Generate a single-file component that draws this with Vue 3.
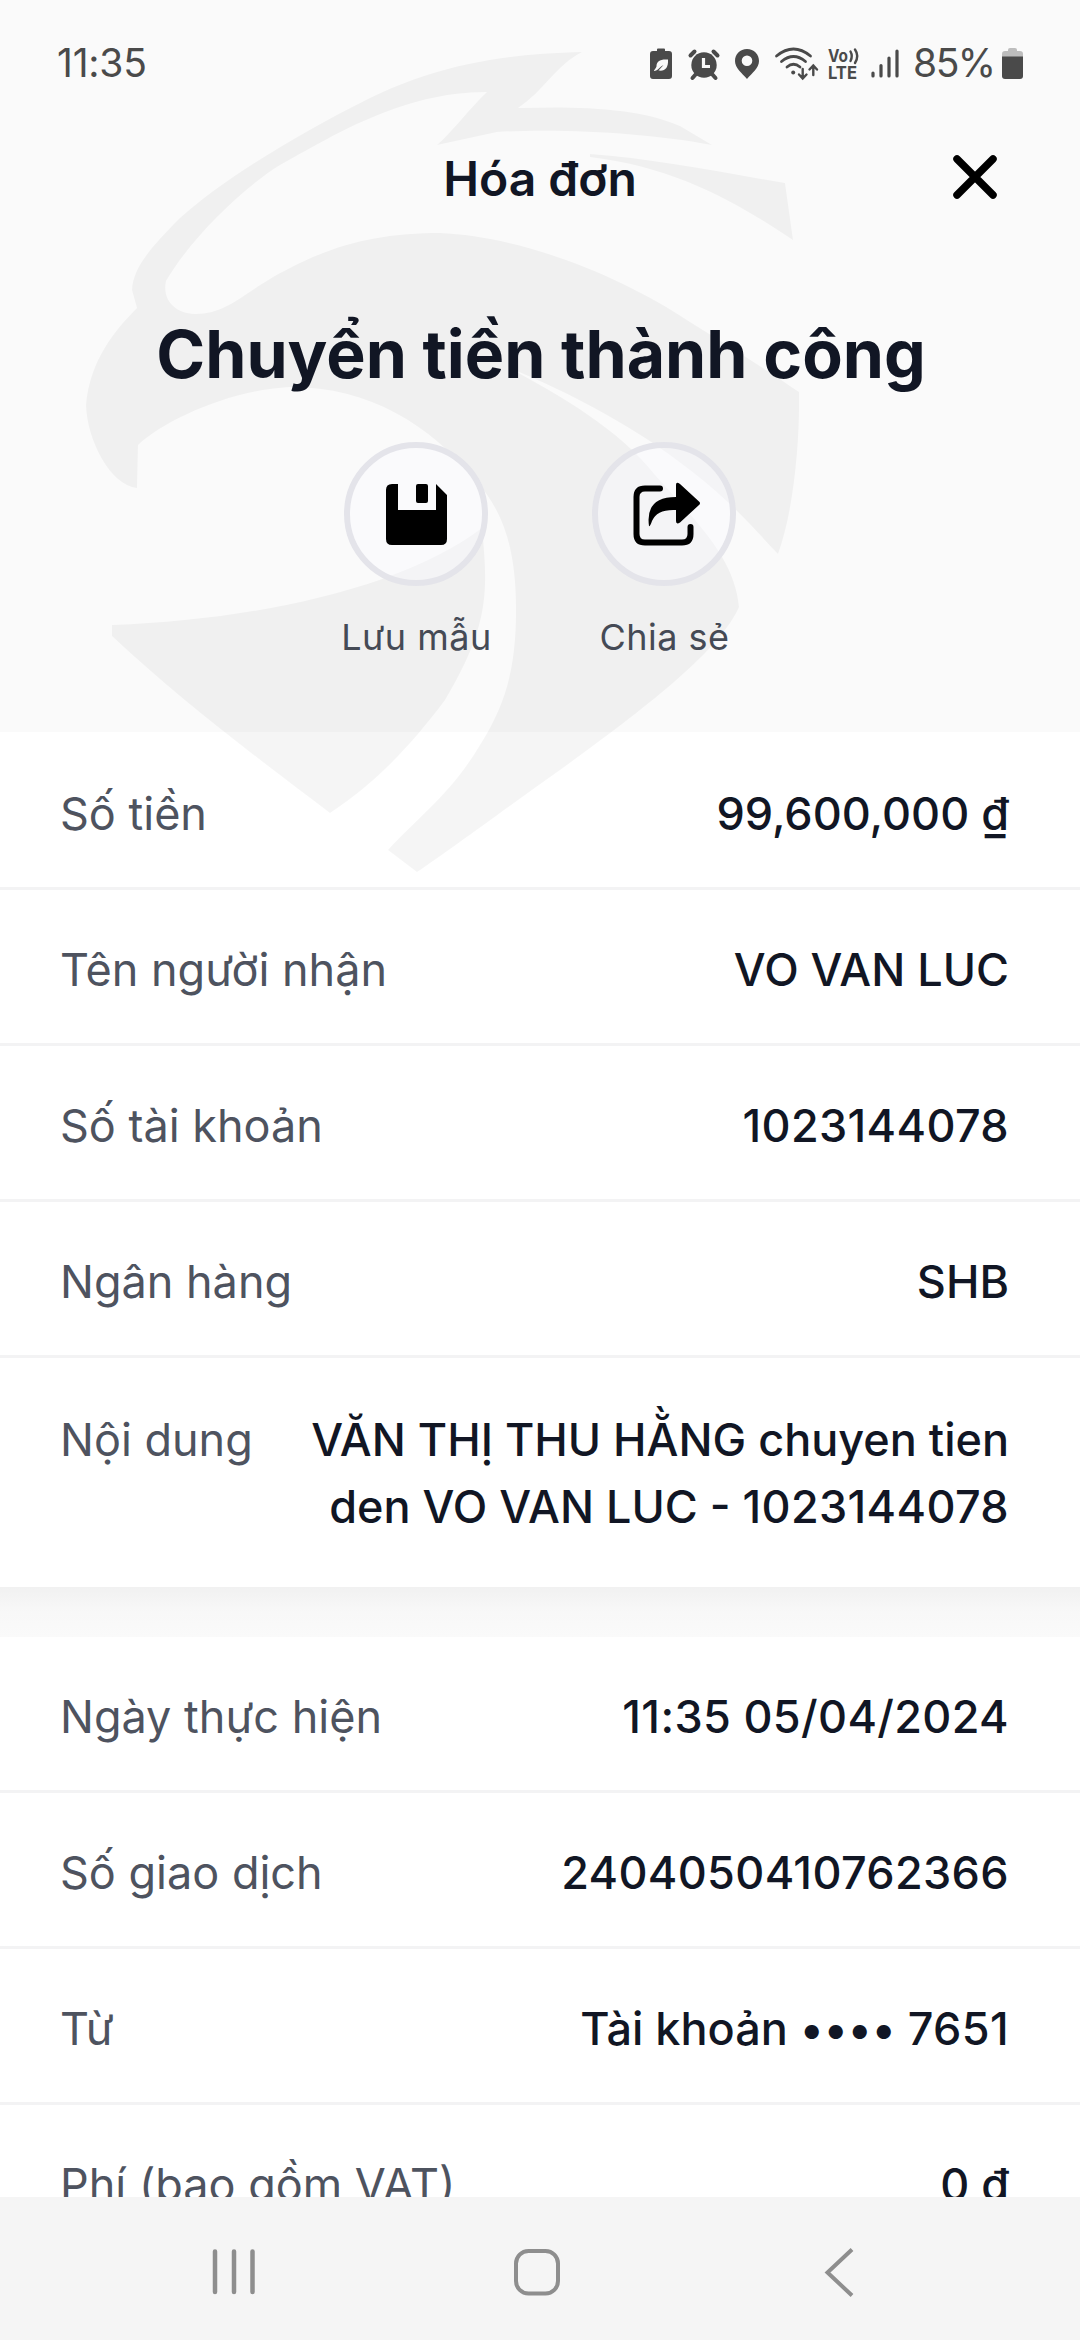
<script setup>
const transfer = [
  { label: 'Số tiền', value: '99,600,000 ₫' },
  { label: 'Tên người nhận', value: 'VO VAN LUC' },
  { label: 'Số tài khoản', digits: '1023144078' },
  { label: 'Ngân hàng', value: 'SHB' },
  { label: 'Nội dung', value: 'VĂN THỊ THU HẰNG chuyen tien den VO VAN LUC - ', digits: '1023144078' },
]
const details = [
  { label: 'Ngày thực hiện', digits: '11:35 05/04/2024' },
  { label: 'Số giao dịch', digits: '2404050410762366' },
  { label: 'Từ', value: 'Tài khoản •••• ', digits: '7651' },
  { label: 'Phí (bao gồm VAT)', value: '0 ₫' },
]
</script>

<template>
  <div class="screen">
    <svg class="watermark" viewBox="0 0 1080 900" width="1080" height="900" fill="#000" fill-opacity="0.04">
      <path d="M132 290C133 268 150 248 180 218C220 182 290 138 370 98C420 74 480 54 582 52C555 66 545 90 518 108C580 106 640 108 680 126L712 145C650 133 560 128 497 132L437 145C452 132 470 108 487 92C400 92 330 138 280 165C240 190 190 240 166 281C162 300 175 313 195 314C230 314 245 290 290 268C340 242 385 233 440 233C520 236 620 275 690 322C735 350 770 372 799 392C800 440 794 510 778 554C755 530 735 505 690 470C640 430 570 392 507 367C560 395 620 430 655 475C700 525 735 560 739 607C720 650 650 705 560 770C510 805 450 850 417 872L388 850C420 815 450 795 480 745C505 705 516 670 516 610C516 560 508 515 475 480C430 425 370 387 290 387C230 390 165 420 138 445L137 488C110 485 87 440 86 405C90 360 115 330 137 308Z" />
      <path d="M590 154C650 158 720 172 785 183L793 240C740 205 680 168 590 157Z" />
      <path d="M112 625C250 620 400 590 482 528C488 590 490 625 445 700C415 740 380 780 330 813C260 760 180 700 112 636Z" />
    </svg>

    <header class="header">
      <div class="status">
        <span class="clock">11:35</span>
        <svg class="status-icons" viewBox="0 0 264 40" width="264" height="40" fill="#4a4a4a">
          <path d="M7 3V1.500Q7 .5 8 .5H14Q15 .5 15 1.500V3H19Q22 3 22 6V28Q22 31 19 31H3Q0 31 0 28V6Q0 3 3 3Z" />
          <path d="M4 22.500C5 21 6 20 6.500 18.500C6.500 13 10 11 18 11.500C18.500 20 15 23.500 8.500 22.500L13.500 17C10 18.500 8 23 4 23Z" fill="#fafafa" />
          <circle cx="54" cy="17" r="12.700" />
          <path d="M46 26L42.500 30M62 26L65.500 30M40.500 7.500L44.500 3.500M67.500 7.500L63.500 3.500" fill="none" stroke="#4a4a4a" stroke-width="4" stroke-linecap="round" />
          <path d="M53.500 10V18.500H60" fill="none" stroke="#fafafa" stroke-width="3.200" />
          <path fill-rule="evenodd" d="M97 1C90 1 85 6 85 13C85 20 92 25 97 31C102 25 109 20 109 13C109 6 104 1 97 1ZM97 7.500A5.300 5.300 0 1 1 97 18.100A5.300 5.300 0 1 1 97 7.500Z" />
          <g fill="none" stroke="#4a4a4a" stroke-width="2.800" stroke-linecap="round">
            <path d="M126.500 8Q143.500 -6 160.500 8M131.500 13.500Q143.500 3.500 155.500 13.500M137 19Q143.500 13.500 150 19" />
            <path stroke-width="2.400" d="M152.700 21V30M149 26.500L152.700 30.500L156.500 26.500M163.300 27V17.500M159.500 21.500L163.300 17.500L167 21.500" />
          </g>
          <circle cx="143.200" cy="24.400" r="2" />
          <text x="178" y="14" class="volte" textLength="20" lengthAdjust="spacingAndGlyphs">Vo</text>
          <text x="178" y="31" class="volte" textLength="29" lengthAdjust="spacingAndGlyphs">LTE</text>
          <path d="M200.500 3.500Q203 8 200.500 13M205 1.500Q209.500 8 205 15" fill="none" stroke="#4a4a4a" stroke-width="2.400" stroke-linecap="round" />
          <path d="M223 25V28M231 17.500V28M239 10V28M247 3V28" fill="none" stroke="#4a4a4a" stroke-width="3.200" stroke-linecap="round" />
        </svg>
        <span class="percent">85%</span>
        <svg class="battery" viewBox="0 0 22 32" width="22" height="32">
          <path d="M6 3V2Q6 0 8 0H13Q15 0 15 2V3H18Q21 3 21 6V10H0V6Q0 3 3 3Z" fill="#bdbdbd" />
          <path d="M0 8.500H21V28Q21 31 18 31H3Q0 31 0 28Z" fill="#4a4a4a" />
        </svg>
      </div>

      <div class="bar">
        <span class="bar-title">Hóa đơn</span>
        <svg class="close" viewBox="0 0 48 48" width="48" height="48" fill="none" stroke="#000" stroke-width="7.500" stroke-linecap="round">
          <path d="M6 6L42 42M42 6L6 42" />
        </svg>
      </div>

      <h1 class="title">Chuyển tiền thành công</h1>

      <div class="actions">
        <div class="action">
          <div class="circle">
            <svg viewBox="0 0 66 64" width="66" height="64">
              <path fill-rule="evenodd" d="M9 2H15V28H53V2L64 13V57Q64 63 58 63H9Q3 63 3 57V8Q3 2 9 2ZM35 2H43Q45 2 45 4V19Q45 21 43 21H35Q33 21 33 19V4Q33 2 35 2Z" />
            </svg>
          </div>
          <span class="action-label">Lưu mẫu</span>
        </div>
        <div class="action">
          <div class="circle">
            <svg class="share" viewBox="0 0 68 64" width="68" height="64">
              <path d="M27 6.500H12Q3.500 6.500 3.500 15V52Q3.500 60.500 12 60.500H49Q57.500 60.500 57.500 52V45" fill="none" stroke="#000" stroke-width="6" stroke-linecap="round" />
              <path d="M43 3Q43 -1 47 2L66 19.500Q68 21 66 23L47 40.500Q43 43 43 39V28Q24 27 19 39Q17 45 16 44Q12 15 43 15Z" />
            </svg>
          </div>
          <span class="action-label">Chia sẻ</span>
        </div>
      </div>
    </header>

    <main class="content">
      <section class="group transfer">
        <div v-for="row in transfer" :key="row.label" class="row">
          <span class="label">{{ row.label }}</span>
          <span class="value">{{ row.value }}<span v-if="row.digits" class="digits">{{ row.digits }}</span></span>
        </div>
      </section>
      <div class="divider"></div>
      <section class="group">
        <div v-for="row in details" :key="row.label" class="row">
          <span class="label">{{ row.label }}</span>
          <span class="value">{{ row.value }}<span v-if="row.digits" class="digits">{{ row.digits }}</span></span>
        </div>
      </section>
    </main>

    <nav class="nav">
      <svg viewBox="0 0 48 52" width="48" height="52" fill="none" stroke="#8e8e8e" stroke-width="4.500" stroke-linecap="round">
        <path d="M5 5.500V46M24 5.500V46M42.500 5.500V46" />
      </svg>
      <svg viewBox="0 0 48 52" width="48" height="52" fill="none" stroke="#8e8e8e" stroke-width="4">
        <rect x="3" y="5" width="42" height="42.500" rx="12.500" />
      </svg>
      <svg viewBox="0 0 48 52" width="48" height="52" fill="none" stroke="#8e8e8e" stroke-width="4">
        <path d="M37 3.500L12.500 26.500L37 49.500" />
      </svg>
    </nav>
  </div>
</template>

<style>
body {
  margin: 0;
  background: #fff;
}
</style>

<style scoped>
.screen {
  position: relative;
  display: flex;
  flex-direction: column;
  width: 1080px;
  height: 2340px;
  overflow: hidden;
  background: #fff;
  color: #111624;
  font-family: Inter, Roboto, "Liberation Sans", sans-serif;
}
.watermark {
  position: absolute;
  top: 0;
  left: 0;
}
.header {
  position: relative;
  flex: none;
  box-sizing: border-box;
  height: 732px;
  background: rgba(0, 0, 0, 0.02);
}
.status {
  display: flex;
  align-items: flex-start;
  box-sizing: border-box;
  height: 128px;
  padding: 48px 56px 0 57px;
  color: #4a4a4a;
}
.status-icons {
  overflow: visible;
}
.clock,
.percent {
  font-size: 39px;
  line-height: 30px;
  font-weight: 400;
  white-space: nowrap;
}
.clock {
  flex: 1;
  letter-spacing: -0.2px;
}
.percent {
  width: 89px;
  margin-left: -1px;
  letter-spacing: -1.5px;
}
.volte {
  font-size: 18px;
  font-weight: 700;
}
.bar {
  display: flex;
  align-items: center;
  justify-content: center;
  position: relative;
  height: 100px;
}
.bar-title {
  font-size: 48px;
  font-weight: 600;
}
.close {
  position: absolute;
  right: 81px;
  top: 25px;
}
.title {
  margin: 86px 0 0;
  padding-left: 2px;
  font-size: 66.200px;
  line-height: 80px;
  font-weight: 700;
  text-align: center;
  white-space: nowrap;
}
.actions {
  display: flex;
  justify-content: center;
  gap: 72px;
  margin-top: 48px;
}
.action {
  display: flex;
  flex-direction: column;
  align-items: center;
  width: 176px;
}
.circle {
  display: flex;
  align-items: center;
  justify-content: center;
  box-sizing: border-box;
  width: 144px;
  height: 144px;
  border: 6px solid #e4e4ea;
  border-radius: 50%;
  background: rgba(250, 250, 255, 0.4);
}
.share {
  margin-left: 6px;
}
.action-label {
  margin-top: 29px;
  padding-left: 1px;
  font-size: 36px;
  line-height: 44px;
  font-weight: 400;
  letter-spacing: 0.500px;
  color: #454a55;
  white-space: nowrap;
}
.content {
  position: relative;
  flex: 1;
  min-height: 0;
  overflow: hidden;
}
.row {
  display: flex;
  justify-content: space-between;
  align-items: flex-start;
  box-sizing: border-box;
  min-height: 156px;
  padding: 46px 71px 40px 60px;
  border-bottom: 3px solid #f3f3f4;
  font-size: 45px;
  line-height: 67px;
}
.row:last-child {
  border-bottom: 0;
}
.transfer {
  padding-top: 2px;
}
.transfer .row:last-child {
  height: 229px;
  padding-top: 48px;
}
.label {
  color: #4e535f;
  white-space: nowrap;
}
.value {
  max-width: 720px;
  font-weight: 500;
  text-align: right;
}
.digits {
  letter-spacing: 0.350px;
}
.divider {
  height: 50px;
  background: linear-gradient(#f1f1f1, #f8f8f8 50%, #fafafa);
}
.nav {
  position: relative;
  display: flex;
  justify-content: space-between;
  flex: none;
  box-sizing: border-box;
  height: 143px;
  padding: 49px 217px 0 210px;
  background: #f5f5f5;
}
</style>
